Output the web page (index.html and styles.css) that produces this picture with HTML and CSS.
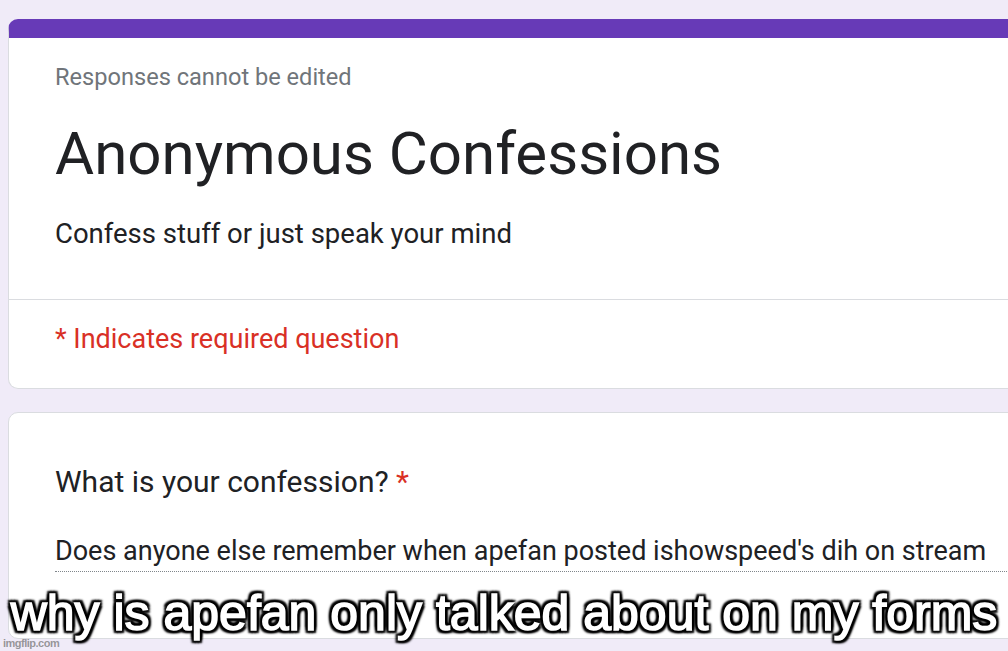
FILE: index.html
```html
<!DOCTYPE html>
<html lang="en">
<head>
<meta charset="utf-8">
<title>Anonymous Confessions</title>
<link rel="stylesheet" href="styles.css">
</head>
<body>
<main class="page">
  <section class="card header-card">
    <div class="header-top">
      <p class="note">Responses cannot be edited</p>
      <h1 class="title">Anonymous Confessions</h1>
      <p class="desc">Confess stuff or just speak your mind</p>
    </div>
    <div class="header-bottom">
      <p class="required-note">* Indicates required question</p>
    </div>
  </section>
  <section class="card question-card">
    <h2 class="question">What is your confession? <span class="star">*</span></h2>
    <div class="answer">Does anyone else remember when apefan posted ishowspeed's dih on stream</div>
  </section>
</main>
<div class="caption">why is apefan only talked about on my forms</div>
<div class="watermark">imgflip.com</div>
</body>
</html>
```
FILE: styles.css
```css
html, body {
  margin: 0;
  padding: 0;
}
body {
  width: 1008px;
  height: 651px;
  overflow: hidden;
  background: #f0ebf8;
  font-family: Roboto, "Liberation Sans", Arial, sans-serif;
  color: #202124;
  position: relative;
}
.page {
  padding: 19px 0 0 8px;
  width: 1200px;
  display: flex;
  flex-direction: column;
  gap: 23px;
}
.card {
  background: #fff;
  border: 1px solid #dadce0;
  border-radius: 10px;
}
.header-card {
  border-top: 19px solid #673ab7;
}
.header-top {
  padding: 23px 45px 47px 46px;
  border-bottom: 1px solid #dadce0;
}
.note {
  margin: 0;
  font-size: 23.6px;
  line-height: 32px;
  color: #70757a;
}
.title {
  margin: 25px 0 0;
  font-size: 60px;
  font-weight: 400;
  line-height: 72px;
}
.desc {
  margin: 26px 0 0;
  font-size: 27.5px;
  line-height: 36px;
}
.header-bottom {
  padding: 22px 46px 32px;
}
.required-note {
  margin: 0;
  font-size: 27px;
  line-height: 34px;
  color: #d93025;
}
.question-card {
  padding: 49px 46px 66px;
}
.question {
  margin: 0;
  font-size: 30px;
  font-weight: 400;
  line-height: 40px;
}
.star {
  color: #d93025;
}
.answer {
  margin-top: 32px;
  font-size: 27px;
  line-height: 34px;
  padding-bottom: 3px;
  border-bottom: 1px dotted #80868b;
  white-space: nowrap;
}
.caption {
  position: absolute;
  left: 0;
  top: 588px;
  width: 1008px;
  text-align: center;
  font-family: "Liberation Sans", Arial, sans-serif;
  font-weight: 400;
  font-size: 50px;
  line-height: 50px;
  color: #fff;
  -webkit-text-stroke: 1.6px #fff;
  white-space: nowrap;
  text-shadow:
    3px 3px 2px #000, -3px -3px 2px #000, 3px -3px 2px #000, -3px 3px 2px #000,
    0 3px 2px #000, 0 -3px 2px #000, 3px 0 2px #000, -3px 0 2px #000,
    0 0 5px #000;
}
.watermark {
  position: absolute;
  left: 3px;
  top: 637px;
  font-family: "Liberation Sans", Arial, sans-serif;
  font-weight: 700;
  font-size: 11px;
  line-height: 13px;
  letter-spacing: -0.5px;
  color: rgba(120, 120, 120, 0.75);
}
```
